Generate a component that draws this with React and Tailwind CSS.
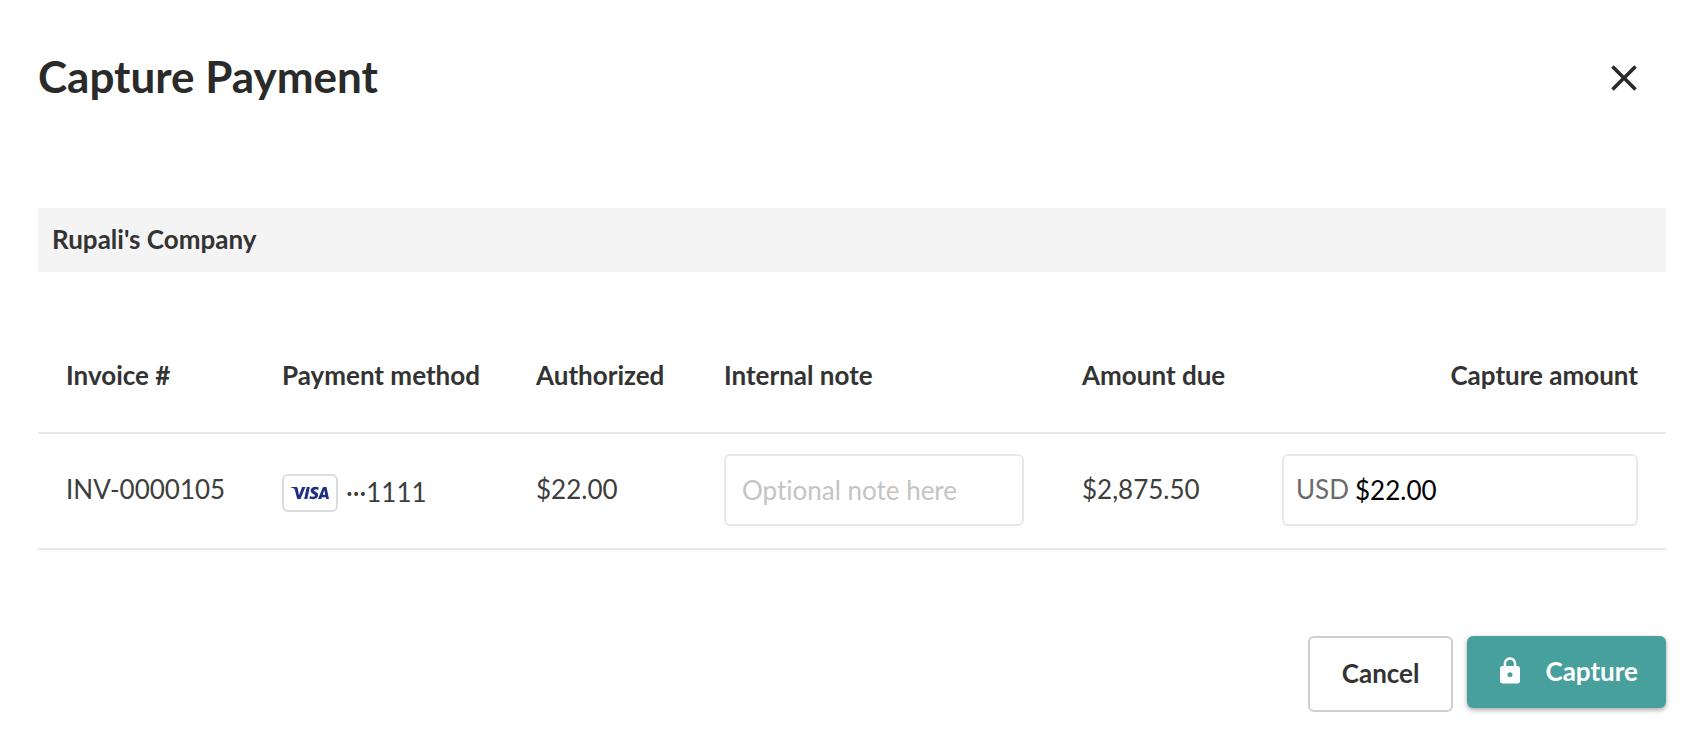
import { MdClose, MdLock } from "react-icons/md";
import { SiVisa } from "react-icons/si";

const HEAD = "h-[114px] border-b-2 border-[#e7e9e9] px-7 pb-0.5 text-left align-middle font-bold";
const CELL = "h-29 border-b-2 border-[#e7e9e9] pl-7 align-middle text-[#3d3d3d]";

export default function App() {
  return (
    <main className="flex flex-col bg-white pt-12 pr-9 pb-7 pl-[38px] font-['Lato',sans-serif] text-[26px] leading-9 text-[#333333] [font-variant-ligatures:none]">
      <header className="flex h-15 items-center justify-between pr-5">
        <h1 className="pb-1 text-[44px] leading-14 font-bold text-[#2a2a2a]">Capture Payment</h1>
        <button type="button" aria-label="Close" className="text-[#2a2a2a]">
          <MdClose size={44} />
        </button>
      </header>

      <h2 className="mt-25 flex h-16 items-center bg-[#f4f4f4] px-[14px] pb-0.5 font-bold">Rupali's Company</h2>

      <table className="mt-12 w-full table-fixed border-separate border-spacing-0">
        <colgroup>
          <col className="w-[216px]" />
          <col className="w-[254px]" />
          <col className="w-[188px]" />
          <col />
          <col className="w-[200px]" />
          <col className="w-[412px]" />
        </colgroup>
        <thead>
          <tr>
            <th className={HEAD}>Invoice #</th>
            <th className={HEAD}>Payment method</th>
            <th className={HEAD}>Authorized</th>
            <th className={HEAD}>Internal note</th>
            <th className={HEAD}>Amount due</th>
            <th className="h-[114px] border-b-2 border-[#e7e9e9] px-7 pb-0.5 text-right align-middle font-bold">
              Capture amount
            </th>
          </tr>
        </thead>
        <tbody>
          <tr>
            <td className={`${CELL} pb-1`}>INV-0000105</td>
            <td className={CELL}>
              <div className="flex items-center gap-2 pt-1">
                <span className="flex h-[38px] w-14 items-center justify-center rounded-md border-2 border-[#dcdcdc] text-[#1f2f87]">
                  <SiVisa size={38} title="Visa" />
                </span>
                <span className="pb-0.5">···1111</span>
              </div>
            </td>
            <td className={`${CELL} pb-1`}>$22.00</td>
            <td className={`${CELL} pr-[30px] pb-0.5`}>
              <input
                type="text"
                aria-label="Internal note"
                placeholder="Optional note here"
                className="block h-18 w-full rounded-md border-2 border-[#e7e9e9] px-4 placeholder:text-[#c4c4c4]"
              />
            </td>
            <td className={`${CELL} pb-1`}>$2,875.50</td>
            <td className={`${CELL} pr-7 pb-0.5`}>
              <div className="flex h-18 items-center gap-1.5 rounded-md border-2 border-[#e7e9e9] px-3">
                <label htmlFor="capture-amount" className="pb-0.5 text-[#6b6b6b]">USD</label>
                <input
                  id="capture-amount"
                  type="text"
                  defaultValue="$22.00"
                  className="min-w-0 flex-1 text-black outline-none"
                />
              </div>
            </td>
          </tr>
        </tbody>
      </table>

      <footer className="mt-[86px] flex items-start justify-end gap-[14px]">
        <button type="button" className="h-19 rounded-md border-2 border-[#cfcfcf] px-8 pb-0.5 font-bold">
          Cancel
        </button>
        <button
          type="button"
          className="flex h-18 items-center gap-5 rounded-md bg-[#48a09c] px-7 pb-0.5 font-bold text-white shadow-[0_2px_5px_rgba(0,0,0,0.35)]"
        >
          <MdLock size={30} />
          Capture
        </button>
      </footer>
    </main>
  );
}
